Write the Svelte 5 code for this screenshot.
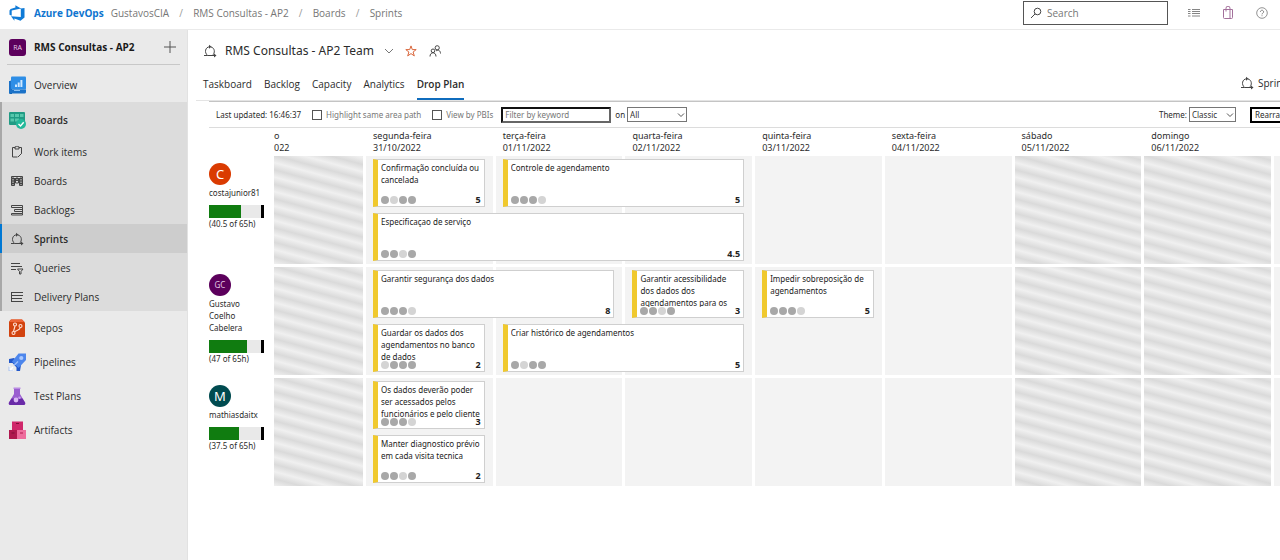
<script>
  const crumbs = ['GustavosCIA', 'RMS Consultas - AP2', 'Boards', 'Sprints'];
  const boardItems = [
    { label: 'Work items', icon: 'work' },
    { label: 'Boards', icon: 'kanban' },
    { label: 'Backlogs', icon: 'backlog' },
    { label: 'Sprints', icon: 'sprint', selected: true },
    { label: 'Queries', icon: 'query' },
    { label: 'Delivery Plans', icon: 'plans' }
  ];
  const hubs = [
    { label: 'Repos', icon: 'repos' },
    { label: 'Pipelines', icon: 'pipelines' },
    { label: 'Test Plans', icon: 'tests' },
    { label: 'Artifacts', icon: 'artifacts' }
  ];
  const tabs = ['Taskboard', 'Backlog', 'Capacity', 'Analytics', 'Drop Plan'];
  const days = [
    { name: 'o', date: '022', off: true, cut: true },
    { name: 'segunda-feira', date: '31/10/2022' },
    { name: 'terça-feira', date: '01/11/2022' },
    { name: 'quarta-feira', date: '02/11/2022' },
    { name: 'quinta-feira', date: '03/11/2022' },
    { name: 'sexta-feira', date: '04/11/2022' },
    { name: 'sábado', date: '05/11/2022', off: true },
    { name: 'domingo', date: '06/11/2022', off: true },
    { name: '', date: '' }
  ];
  // light: index of the pale dot; col: first day column; lane: vertical slot
  const people = [
    {
      name: 'costajunior81', initials: 'C', color: '#da3b01', done: 40.5, total: 65,
      cards: [
        { title: 'Confirmação concluída ou cancelada', col: 1, span: 1, lane: 1, light: 1, effort: '5' },
        { title: 'Controle de agendamento', col: 2, span: 2, lane: 1, light: 3, effort: '5' },
        { title: 'Especificaçao de serviço', col: 1, span: 3, lane: 2, light: 2, effort: '4.5' }
      ]
    },
    {
      name: 'Gustavo Coelho Cabelera', initials: 'GC', color: '#5c005c', done: 47, total: 65,
      cards: [
        { title: 'Garantir segurança dos dados', col: 1, span: 2, lane: 1, light: 3, effort: '8' },
        { title: 'Garantir acessibilidade dos dados dos agendamentos para os', col: 3, span: 1, lane: 1, light: 2, effort: '3' },
        { title: 'Impedir sobreposição de agendamentos', col: 4, span: 1, lane: 1, light: 3, effort: '5' },
        { title: 'Guardar os dados dos agendamentos no banco de dados', col: 1, span: 1, lane: 2, light: 0, effort: '2' },
        { title: 'Criar histórico de agendamentos', col: 2, span: 2, lane: 2, light: 1, effort: '5' }
      ]
    },
    {
      name: 'mathiasdaitx', initials: 'M', color: '#004b50', done: 37.5, total: 65,
      cards: [
        { title: 'Os dados deverão poder ser acessados pelos funcionários e pelo cliente', col: 1, span: 1, lane: 1, light: 3, effort: '3' },
        { title: 'Manter diagnostico prévio em cada visita tecnica', col: 1, span: 1, lane: 2, light: 2, effort: '2' }
      ]
    }
  ];
</script>

{#snippet sprintIcon()}
  <svg class="line" viewBox="0 0 14 14" width="14" height="14" aria-hidden="true">
    <path d="M1 11.500h3.700C.8 8.500 2.500 3 6.500 2.800M8 3c3.800.8 4.500 6 1.300 8.500M4.700 11.500h7.300" />
    <path d="M6 .8l2.500 2L6 4.800zM11 9.500l2.500 2-2.500 2z" fill="#444" stroke="none" />
  </svg>
{/snippet}

{#snippet chevron()}
  <svg class="chev" viewBox="0 0 8 8" width="8" height="8" aria-hidden="true"><path d="M1 2.500l3 3 3-3" /></svg>
{/snippet}

{#snippet smallIcon(kind)}
  {#if kind === 'sprint'}
    {@render sprintIcon()}
  {:else}
    <svg class="line" viewBox="0 0 14 14" width="14" height="14" aria-hidden="true">
      {#if kind === 'work'}
        <path d="M5 2.500H2.500v9.500h5M9 2.500h2.500v6l-3.500 3.500M5 4V1.800h1.200a.9.9 0 0 1 1.600 0H9V4zM8 12l3.500-3.500" />
      {:else if kind === 'kanban'}
        <path d="M1.500 2.500h11v2h-11zM1.500 4.500v7h3v-7M5.500 4.500v4.500h3v-4.500M9.500 4.500v7h3v-7M1.500 7h3M5.500 6.500h3M9.500 7h3M1.500 9.500h3M9.500 9.500h3M7 2.500v4M3 2.500v9M11 2.500v9" />
      {:else if kind === 'backlog'}
        <path d="M1.500 2.500h11v2h-11zM4.500 6.500h8v2h-8zM1.500 10.500h11v1.500h-11zM12.500 4.500v6" />
      {:else if kind === 'query'}
        <path d="M1 2.500h9M1 5.500h11M1 8.500h5M7.500 8h5.500l-2 2.500V13H9.500v-2.500z" />
      {:else}
        <path d="M1.500 2v10M1.500 2.500H13M1.500 5.500H13M1.500 8.500H12M1.500 11.500H13" />
      {/if}
    </svg>
  {/if}
{/snippet}

{#snippet hubIcon(kind)}
  <svg viewBox="0 0 18 18" width="18" height="18" aria-hidden="true">
    {#if kind === 'overview'}
      <path fill="#0b5cab" d="M1 5.500L4 4v14H2.500A1.500 1.500 0 0 1 1 16.500z" />
      <rect x="3" y="0.500" width="15" height="13" rx="1" fill="#2e8ee6" />
      <path fill="#1b72c8" d="M1 5h2v8.500h15V16a1.500 1.500 0 0 1-1.500 1.500h-14A1.500 1.500 0 0 1 1 16z" />
      <path fill="#cfe8ff" d="M7 8.500h2V11H7zM9.700 6.500h2V11h-2zM12.400 4h2v7h-2z" />
      <path stroke="#8cc3f5" d="M6 14.500h6" />
    {:else if kind === 'boards'}
      <rect x="1" y="1" width="16" height="13" rx="1" fill="#219b84" />
      <path fill="#57c7ac" d="M2.500 3h3.500v3H2.500zM7 3h4v3H7zM12 3h3.500v3H12zM2.500 7.500H6v3H2.500zM7 7.500h4v3H7z" />
      <circle cx="13" cy="13" r="5" fill="#23b99a" />
      <path d="M10.500 13l2 2 3.200-3.700" fill="none" stroke="#fff" stroke-width="1.400" />
    {:else if kind === 'repos'}
      <path fill="#d2430f" d="M3 0.500h11l3 3V17a1 1 0 0 1-1 1H2a1 1 0 0 1-1-1V2.500z" />
      <path fill="#ed6437" d="M3 0.500h11l2.500 2.500H1.500z" />
      <g fill="none" stroke="#ffe2d6" stroke-width="1.100">
        <circle cx="5.500" cy="14" r="1.500" /><circle cx="7" cy="5.500" r="1.500" /><circle cx="12.500" cy="7" r="1.500" />
        <path d="M5.500 12.500L7 7M12.300 8.500c-.3 3-4 2.500-5.800 4.300" />
      </g>
    {:else if kind === 'pipelines'}
      <path fill="#2358c9" d="M1 6l5-1 7 7-1 6H8.500v-3.500L4.500 10H1z" />
      <path fill="#4d86ec" d="M10.500 0.500H18V7l-7.500 8L4 8.500z" />
      <circle cx="13.300" cy="5" r="2.100" fill="#a9c8ff" />
      <path d="M10 8.500L6 12.500" stroke="#9fc0fa" stroke-width="1.200" />
      <path d="M1.500 13v4.500H6M1.500 17.500L5 14" fill="none" stroke="#fff" stroke-width="1.500" />
      <path d="M1 13.500V18h4.500" fill="none" stroke="#86a9e8" stroke-width=".7" />
    {:else if kind === 'tests'}
      <path fill="#9a5fd0" d="M6 1h6v6l5 8.500c.6 1.200 0 2.500-1.300 2.500H2.300C1 18 .4 16.700 1 15.500L6 7z" />
      <path fill="#6a2ba8" d="M3.500 11.500h11L17 15.500c.6 1.200 0 2.500-1.300 2.500H2.300C1 18 .4 16.700 1 15.500z" />
      <path fill="#b98be3" d="M5.500 0.500h7V2h-7z" />
      <circle cx="8" cy="13" r="2.400" fill="#d9b8f5" /><circle cx="11.500" cy="10.800" r="1.300" fill="#c79cec" />
    {:else}
      <path fill="#d0286b" d="M4 0.500h11v8.500H4z" />
      <path fill="#b0184f" d="M1 9h8v9H1z" />
      <path fill="#ee6c9d" d="M9 9h9v9H9z" />
      <path stroke="#7f0f38" d="M8 2.500h3M3.500 12h3" /><path stroke="#b0184f" d="M12 12h3" />
    {/if}
  </svg>
{/snippet}

<div class="shell">
  <header class="topbar">
    <a class="brand" href="#home">
      <svg viewBox="0 0 16 16" width="16" height="16" aria-hidden="true">
        <path fill="#0f7bd7" d="M15.500 3v9.600l-4 3.200-6.100-2.200v2.200L2 11.300l9.800.8V3.600zM12 3.500L6.400.2v2.200L1.600 3.900.5 5.500v4.300l2.200.9V5.400z" />
      </svg>
      <span>Azure DevOps</span>
    </a>
    <nav class="crumbs" aria-label="Breadcrumb">
      {#each crumbs as crumb, i}
        {#if i}<span class="slash">/</span>{/if}
        <a href="#crumb">{crumb}</a>
      {/each}
    </nav>
    <label class="search">
      <svg class="line" viewBox="0 0 12 12" width="12" height="12" aria-hidden="true"><circle cx="7.500" cy="4.500" r="3.300" /><path d="M5.100 6.900L1 11" /></svg>
      <input type="search" placeholder="Search" aria-label="Search" />
    </label>
    <div class="tools">
      <button aria-label="Work list">
        <svg viewBox="0 0 12 12" width="12" height="12"><path d="M0 2.500h2.500M0 4.500h2.500M0 6.500h2.500M0 9h2.500M4 2.500h8M4 4.500h8M4 6.500h8M4 9h8" fill="none" stroke="#777" stroke-width=".9" /></svg>
      </button>
      <button aria-label="Marketplace">
        <svg viewBox="0 0 12 14" width="12" height="14"><path d="M1.500 3.500h9v8a1 1 0 0 1-1 1h-7a1 1 0 0 1-1-1zM4 5.500V2.200a2 2 0 0 1 4 0V12" fill="none" stroke="#a3709b" /></svg>
      </button>
      <button aria-label="Help">
        <svg viewBox="0 0 12 12" width="12" height="12"><circle cx="6" cy="6" r="5.300" fill="none" stroke="#777" stroke-width=".8" /><path d="M4.400 4.800a1.600 1.600 0 1 1 2.400 1.400c-.6.300-.8.500-.8 1.200M6 8.300v.9" fill="none" stroke="#777" stroke-width=".9" /></svg>
      </button>
    </div>
  </header>

  <div class="body">
    <aside class="sidebar">
      <div class="project">
        <span class="badge">RA</span>
        <strong>RMS Consultas - AP2</strong>
        <button aria-label="Add">
          <svg viewBox="0 0 12 12" width="12" height="12"><path d="M6 0v12M0 6h12" stroke="#555" /></svg>
        </button>
      </div>
      <nav aria-label="Project">
        <a class="hub" href="#overview">{@render hubIcon('overview')}<span>Overview</span></a>
        <div class="section">
          <a class="hub current" href="#boards">{@render hubIcon('boards')}<span>Boards</span></a>
          {#each boardItems as item}
            <a class="item" class:selected={item.selected} href="#item">{@render smallIcon(item.icon)}<span>{item.label}</span></a>
          {/each}
        </div>
        {#each hubs as hub}
          <a class="hub" href="#hub">{@render hubIcon(hub.icon)}<span>{hub.label}</span></a>
        {/each}
      </nav>
    </aside>

    <main>
      <div class="title">
        {@render sprintIcon()}
        <h1>RMS Consultas - AP2 Team</h1>
        <svg class="line down" viewBox="0 0 10 10" width="10" height="10" aria-hidden="true"><path d="M1 3l4 4 4-4" /></svg>
        <svg class="star" viewBox="0 0 12 12" width="12" height="12" aria-hidden="true"><path d="M6 .9l1.300 3.700h3.900L8.100 7l1.200 3.900L6 8.600l-3.300 2.300L3.900 7 .8 4.600h3.900z" /></svg>
        <svg class="line" viewBox="0 0 12 12" width="12" height="12" aria-hidden="true"><circle cx="8.200" cy="2.800" r="2.100" /><circle cx="4" cy="5.800" r="1.800" /><path d="M1 11.500c0-5 6-5 6 0M7 6c2-1.800 4.400-.6 4.500 2.500" /></svg>
      </div>

      <div class="tabs">
        {#each tabs as tab, i}
          <a href="#tab" class:active={i === 4}>{tab}</a>
        {/each}
        <button class="sprint">{@render sprintIcon()}<span>Sprin</span></button>
      </div>

      <section class="plan">
        <div class="toolbar">
          <span class="updated">Last updated: 16:46:37</span>
          <label class="check"><input type="checkbox" /><span>Highlight same area path</span></label>
          <label class="check"><input type="checkbox" /><span>View by PBIs</span></label>
          <input class="filter" type="text" placeholder="Filter by keyword" aria-label="Filter by keyword" />
          <label class="pick" for="field">on</label>
          <span class="select wide"><select id="field"><option>All</option></select>{@render chevron()}</span>
          <label class="pick theme" for="theme">Theme:</label>
          <span class="select"><select id="theme"><option>Classic</option></select>{@render chevron()}</span>
          <button class="rearrange">Rearra</button>
        </div>

        <div class="grid head">
          {#each days as day, i}
            <div class="day" class:cut={day.cut} style:grid-column={i + 2}>{day.name}<br />{day.date}</div>
          {/each}
        </div>

        {#each people as person}
          <div class="grid row">
            <div class="person">
              <span class="avatar" class:pair={person.initials.length > 1} style:background={person.color}>{person.initials}</span>
              <span class="name">{person.name}</span>
              <div class="load"><div style:width="{(person.done / person.total) * 100}%"></div></div>
              <span class="hours">({person.done} of {person.total}h)</span>
            </div>
            {#each days as day, i}
              <div class="cell" class:off={day.off} style:grid-column={i + 2}></div>
            {/each}
            {#each person.cards as card}
              <article class="card" style:grid-column="{card.col + 2} / span {card.span}" style:grid-row={card.lane}>
                <p>{card.title}</p>
                <footer>
                  {#each [0, 1, 2, 3] as n}<i class:light={n === card.light}></i>{/each}
                  <b>{card.effort}</b>
                </footer>
              </article>
            {/each}
          </div>
        {/each}
      </section>
    </main>
  </div>
</div>

<style>
  :global(body) { background: #fff; overflow-x: hidden; }
  .shell {
    display: flex; flex-direction: column; min-height: 100vh; overflow: hidden;
    font: 10px/16px "Open Sans", "Segoe UI", sans-serif; color: #2b2b2b;
  }
  .shell *, .shell *::before { box-sizing: border-box; }
  a { color: inherit; text-decoration: none; }
  button { font: inherit; color: inherit; background: none; border: 0; padding: 0; display: flex; align-items: center; }
  svg { flex: none; display: block; }
  .line { fill: none; stroke: #444; stroke-width: 1; }

  .topbar { display: flex; align-items: center; height: 30px; padding: 0 12px 4px 9px; border-bottom: 1px solid #eaeaea; }
  .brand { display: flex; align-items: center; gap: 9px; font-weight: 700; color: #0f75cf; white-space: nowrap; }
  .crumbs { display: flex; margin-left: 7px; color: #767676; white-space: nowrap; }
  .slash { width: 24px; text-align: center; color: #999; }
  .search { display: flex; align-items: center; gap: 5px; width: 145px; height: 24px; margin-left: auto; padding: 0 6px; border: 1px solid #555; }
  .search input { flex: 1; min-width: 0; border: 0; outline: 0; padding: 0; font: inherit; background: none; appearance: none; }
  input::placeholder { color: #767676; opacity: 1; }
  .tools { display: flex; gap: 22px; margin-left: 20px; }

  .body { display: flex; flex: 1; }
  .sidebar { width: 188px; flex: none; background: #eaeaea; border-right: 1px solid #e2e2e2; }
  .project { display: flex; align-items: center; gap: 8px; height: 35px; margin: 0 7px 3px; padding: 0 4px 0 2px; border-bottom: 1px solid #c8c8c8; white-space: nowrap; color: #1a1a1a; }
  .project button { margin-left: auto; }
  .badge { width: 17px; height: 17px; border-radius: 3px; background: #5c005c; color: #e8cfe8; font-size: 7px; line-height: 17px; text-align: center; }
  .hub, .item { display: flex; align-items: center; white-space: nowrap; }
  .hub { height: 34px; padding-left: 8px; gap: 8px; }
  .section { background: #dcdcdc; border-left: 2px solid #a8a8a8; }
  .section .hub { height: 35px; padding-left: 6px; font-weight: 600; }
  .item { height: 29px; padding-left: 8px; gap: 10px; }
  .item.selected { background: #cdcdcd; font-weight: 600; margin-left: -2px; border-left: 2px solid #0078d4; }

  main { flex: 1; min-width: 0; overflow: hidden; }
  .title { display: flex; align-items: center; height: 42px; padding-left: 15px; }
  h1 { margin: 0 10px 0 8px; font: 400 12px/20px "Noto Sans", sans-serif; white-space: nowrap; }
  .down { stroke: #777; margin-right: 11px; }
  .star { fill: none; stroke: #d9663b; margin-right: 12px; }
  .tabs { display: flex; gap: 12px; height: 29px; margin-left: 8px; padding-left: 7px; border-bottom: 1px solid #e4e4e4; white-space: nowrap; }
  .tabs a { padding-top: 4px; height: 28px; }
  .tabs .active { font-weight: 600; border-bottom: 2px solid #0f6cbd; }
  .sprint { width: 40px; gap: 4px; height: 22px; margin-left: auto; }

  .plan { margin-left: 21px; font-family: "Noto Sans", "Segoe UI", sans-serif; }
  .toolbar { display: flex; align-items: center; height: 27px; padding: 0 0 0 7px; border-top: 1px solid #c4c4c4; border-bottom: 1px solid #dcdcdc; font-size: 8px; line-height: 14px; white-space: nowrap; }
  .check { display: flex; align-items: center; gap: 4px; margin-left: 11px; color: #777; }
  .check input { appearance: none; width: 10px; height: 10px; margin: 0; border: 1px solid #555; background: #fff; }
  .filter { width: 110px; height: 16px; margin-left: 8px; padding: 0 2px; border: 2px inset #666; border-radius: 0; font: inherit; }
  .pick { margin: 0 2px 0 4px; }
  .theme { margin-left: auto; }
  .select { position: relative; width: 47px; }
  .select.wide { width: 60px; }
  select { appearance: none; display: block; width: 100%; height: 15px; padding: 0 2px; border: 1px solid #767676; border-radius: 0; background: #fff; font: inherit; color: #333; }
  .chev { position: absolute; right: 2px; top: 4px; fill: none; stroke: #555; }
  .rearrange { width: 30px; height: 16px; margin-left: 14px; padding-left: 3px; border: 2px solid #000; border-right: 0; background: #fff; }

  .grid { display: grid; grid-template-columns: 62px 89px repeat(7, minmax(0, 1fr)) 6px; column-gap: 3px; }
  .head { padding: 2px 0; font-size: 9px; line-height: 12px; white-space: nowrap; }
  .day { padding-left: 7px; height: 24px; }
  .day.cut { padding-left: 0; }
  .row { grid-template-rows: repeat(2, minmax(54px, auto)); margin-bottom: 3px; }
  .cell { grid-row: 1 / span 2; background: #f3f3f3; }
  .off { background: repeating-linear-gradient(15deg, #f0f0f0 0, #dadada 7px, #f0f0f0 14px); }
  .person { grid-column: 1; grid-row: 1 / span 2; width: 55px; padding-top: 7px; font-size: 8px; line-height: 12px; }
  .avatar { display: block; width: 22px; height: 22px; margin-bottom: 2px; border-radius: 50%; color: #fff; font-size: 13px; line-height: 22px; text-align: center; }
  .avatar.pair { font-size: 8px; color: #e3c8e3; }
  .name, .hours { display: block; }
  .hours { white-space: nowrap; }
  .load { height: 13px; margin-top: 6px; background: #e9e9e9; border-right: 3px solid #000; }
  .load div { height: 100%; background: #107c10; }
  .card { display: flex; flex-direction: column; height: 48px; margin: 3px 8px 3px 7px; padding: 2px 2px 0 3px; background: #fff; border: 1px solid #cfcfcf; border-left: 5px solid #f0c92e; color: #222; z-index: 1; font-size: 8px; line-height: 12px; }
  .card p { flex: 1; min-height: 0; margin: 0; overflow: hidden; }
  .card footer { display: flex; align-items: center; gap: 1px; height: 10px; flex: none; padding: 0 1px 2px 0; }
  .card i { width: 8px; height: 8px; border-radius: 50%; background: #a8a8a8; }
  .card i.light { background: #d4d4d4; }
  .card b { margin-left: auto; font-size: 9px; }
</style>
